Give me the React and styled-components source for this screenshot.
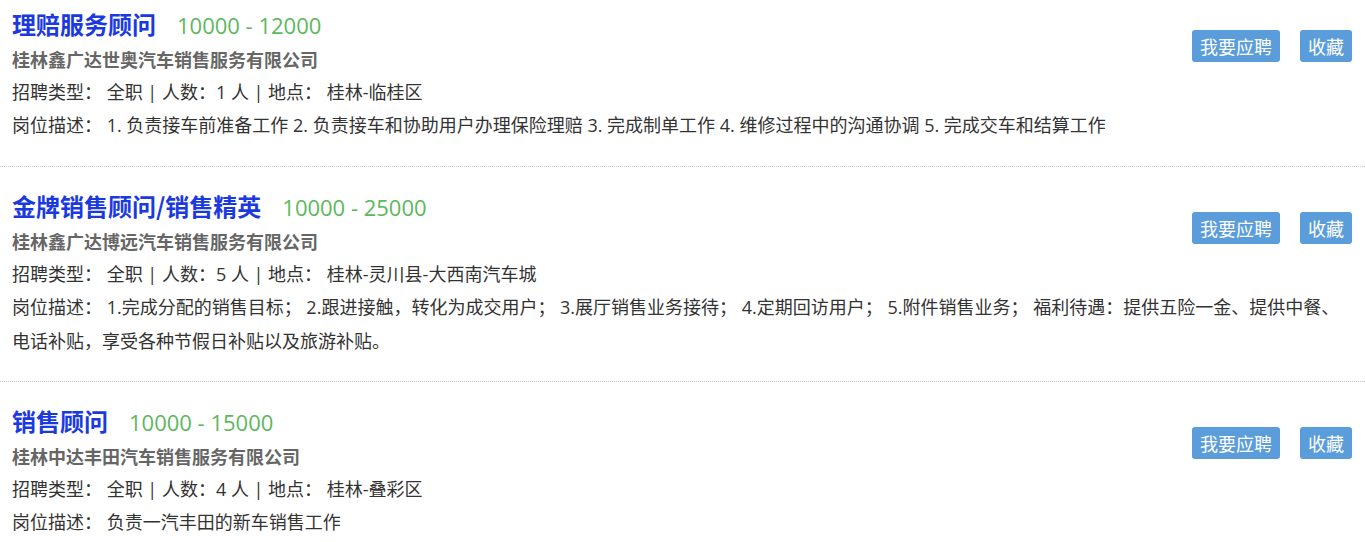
import React from "react";
import styled, { createGlobalStyle } from "styled-components";

const Global = createGlobalStyle`
  html, body { margin: 0; padding: 0; background: #fff; }
  body {
    font-family: "Open Sans", "Noto Sans CJK SC", sans-serif;
    color: #333;
    overflow: hidden;
  }
`;

const List = styled.div`
  width: 1365px;
`;

const Item = styled.div`
  padding: ${(p) => (p.$first ? "10px" : "25px")} 12px 23px 12px;
  border-bottom: 1px dotted #c8c8c8;
  &::after { content: ""; display: block; clear: both; }
  &:last-child { border-bottom: none; }
`;

const TitleRow = styled.div`
  display: flex;
  align-items: baseline;
  height: 28px;
  line-height: 28px;
  margin-bottom: 5px;
`;

const Title = styled.a`
  font-family: "Noto Sans CJK SC", sans-serif;
  font-size: 24px;
  font-weight: 700;
  color: #1a3ae0;
  text-decoration: none;
`;

const Salary = styled.span`
  font-size: 22px;
  color: #5cb85c;
  margin-left: 21px;
`;

const Company = styled.div`
  font-family: "Noto Sans CJK SC", sans-serif;
  font-size: 18px;
  font-weight: 700;
  color: #666;
  line-height: 33px;
`;

const Line = styled.div`
  font-size: 18px;
  color: #333;
  line-height: 33.4px;
  white-space: pre-wrap;
`;

const Actions = styled.div`
  float: right;
  display: flex;
  gap: 20px;
  margin-top: 20px;
  margin-right: 1px;
`;

const Button = styled.button`
  height: 32px;
  padding: 0 8px;
  border: none;
  border-radius: 3px;
  background: #5b9dda;
  color: #fff;
  font-family: "Noto Sans CJK SC", sans-serif;
  font-size: 18px;
  line-height: 32px;
  cursor: pointer;
`;

const jobs = [
  {
    title: "理赔服务顾问",
    salary: "10000 - 12000",
    company: "桂林鑫广达世奥汽车销售服务有限公司",
    info: "全职 | 人数：1 人 | 地点：",
    place: "桂林-临桂区",
    desc: "1. 负责接车前准备工作 2. 负责接车和协助用户办理保险理赔 3. 完成制单工作 4. 维修过程中的沟通协调 5. 完成交车和结算工作",
  },
  {
    title: "金牌销售顾问/销售精英",
    salary: "10000 - 25000",
    company: "桂林鑫广达博远汽车销售服务有限公司",
    info: "全职 | 人数：5 人 | 地点：",
    place: "桂林-灵川县-大西南汽车城",
    desc: "1.完成分配的销售目标； 2.跟进接触，转化为成交用户； 3.展厅销售业务接待； 4.定期回访用户； 5.附件销售业务； 福利待遇：提供五险一金、提供中餐、电话补贴，享受各种节假日补贴以及旅游补贴。",
  },
  {
    title: "销售顾问",
    salary: "10000 - 15000",
    company: "桂林中达丰田汽车销售服务有限公司",
    info: "全职 | 人数：4 人 | 地点：",
    place: "桂林-叠彩区",
    desc: "负责一汽丰田的新车销售工作",
  },
];

export default function App() {
  return (
    <>
      <Global />
      <List>
        {jobs.map((j, i) => (
          <Item key={i} $first={i === 0}>
            <Actions>
              <Button>我要应聘</Button>
              <Button>收藏</Button>
            </Actions>
            <TitleRow>
              <Title href="#">{j.title}</Title>
              <Salary>{j.salary}</Salary>
            </TitleRow>
            <Company>{j.company}</Company>
            <Line>{"招聘类型： " + j.info + " " + j.place}</Line>
            <Line>{"岗位描述： " + j.desc}</Line>
          </Item>
        ))}
      </List>
    </>
  );
}
